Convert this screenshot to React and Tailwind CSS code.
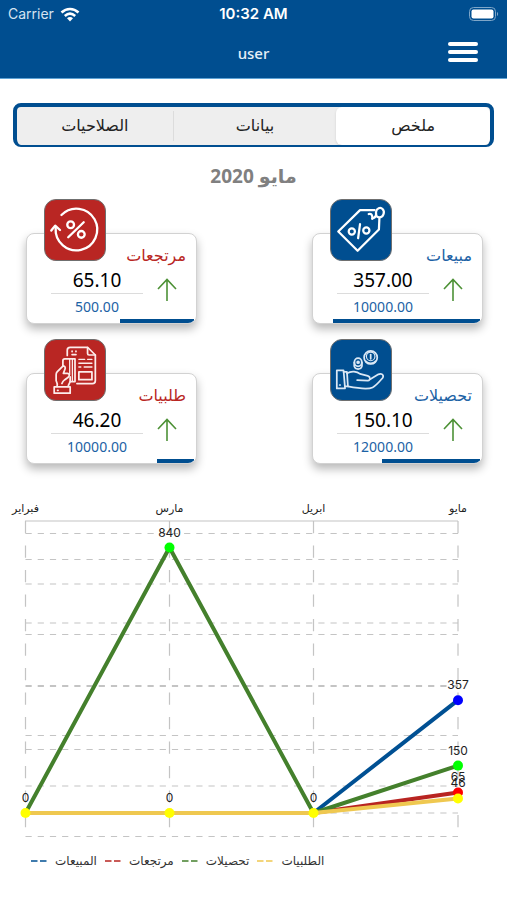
import { useState } from 'react';

const TABS = ['ملخص', 'بيانات', 'الصلاحيات'];

const STATS = [
  { id: 'sales', title: 'مبيعات', value: '357.00', target: '10000.00', progress: 87, tone: 'blue', Icon: TagIcon },
  { id: 'returns', title: 'مرتجعات', value: '65.10', target: '500.00', progress: 44, tone: 'red', Icon: ReturnIcon },
  { id: 'collections', title: 'تحصيلات', value: '150.10', target: '12000.00', progress: 58, tone: 'blue', Icon: HandIcon },
  { id: 'orders', title: 'طلبيات', value: '46.20', target: '10000.00', progress: 22, tone: 'red', Icon: OrderIcon },
];

const MONTHS = ['فبراير', 'مارس', 'ابريل', 'مايو'];

const SERIES = [
  { name: 'المبيعات', line: '#005093', dot: '#0000ff', data: [0, 0, 0, 357] },
  { name: 'مرتجعات', line: '#b82421', dot: '#ff0000', data: [0, 0, 0, 65] },
  { name: 'تحصيلات', line: '#44802c', dot: '#00ff00', data: [0, 840, 0, 150] },
  { name: 'الطلبيات', line: '#efc850', dot: '#ffff00', data: [0, 0, 0, 46] },
];

// chart geometry, in viewBox units
const COLS = [25.5, 169.5, 313.5, 458];
const GRID = [43.5, 69.5, 94, 133, 144.5, 195.5, 196.5, 245.5, 259.5, 296, 323, 346.5];
const AXIS_TOP = 31;
const ZERO = 323;
const yOf = (v) => ZERO - v * 0.316;

function ReturnIcon() {
  return (
    <svg viewBox="0 0 62 62" className="h-full w-full" fill="none" stroke="white" strokeWidth="2.4" strokeLinecap="round" strokeLinejoin="round" aria-hidden="true">
      <path d="M17 15.5A21.5 21.5 0 1 1 11 29" />
      <path d="M6.5 31.5 10.5 26.5 15.5 31" />
      <circle cx="26.5" cy="25.5" r="3.5" />
      <circle cx="37.5" cy="35.5" r="3.5" />
      <path d="M40 23 24 38.5" />
    </svg>
  );
}

function TagIcon() {
  return (
    <svg viewBox="0 0 62 62" className="h-full w-full" fill="none" stroke="white" strokeWidth="2.3" strokeLinecap="round" strokeLinejoin="round" aria-hidden="true">
      <path d="M45 10.5H30L7.5 32.5 27.5 52.5 49.5 30.5 50 19" />
      <path d="M39 14.5C40.5 14 42 14.5 42.5 16.5C43 18.5 42.5 19.5 42.5 19.5" />
      <path d="M43 19C46.5 18 47 15 46.5 12.5C47 8.5 51 7 53.5 9.5C56 12.5 54 18 50 18C47.5 18 46 16.5 46.5 12.5" />
      <circle cx="21.5" cy="32.5" r="3.2" />
      <circle cx="36.5" cy="31.5" r="3.2" />
      <path d="M30 25 28 39.5" />
    </svg>
  );
}

function HandIcon() {
  return (
    <svg viewBox="0 0 62 62" className="h-full w-full" fill="none" stroke="#dbe8f5" strokeWidth="1.8" strokeLinecap="round" strokeLinejoin="round" aria-hidden="true">
      <path d="M6 31.5H13L14.5 50H6Z" />
      <path d="M13 33H16.5L17.5 48H14.5" />
      <path d="M9 46.5H9.5" />
      <path d="M16.5 34.5C21 31.5 27 32.5 30 35L38 37C41 38 41 41.5 38 42L27 41.5" />
      <path d="M40.5 40.5 49 35.5C52 34 55 36 53.5 39C50 43 47 47 43 49C38 51.5 28 50 17.5 48" />
      <circle cx="41" cy="18" r="6.8" />
      <circle cx="41" cy="17" r="4.4" strokeWidth="1.2" />
      <path d="M41 15V19.5" />
      <path d="M36 22C38 25 44 25 46 22" />
      <ellipse cx="28" cy="23" rx="3.8" ry="4.2" />
      <path d="M24 23V27C25 31 31 31 32 27V23" />
      <circle cx="28" cy="23" r="1" />
    </svg>
  );
}

function OrderIcon() {
  return (
    <svg viewBox="0 0 62 62" className="h-full w-full" fill="none" stroke="#fdeceb" strokeWidth="1.8" strokeLinecap="round" strokeLinejoin="round" aria-hidden="true">
      <path d="M23 16V10.5C23 8.5 24 7.5 26 7.5H44L52 15.5V42C52 44 51 45 49 45H33" />
      <path d="M44 8V14C44 15 44.5 15.5 45.5 15.5H52" />
      <path d="M28 11.5V12M32 11.5V12M28 15H32" />
      <path d="M35 20H41M44 20H48.5M35 24H48.5M35 28H37M40.5 28H48.5" strokeWidth="1.5" />
      <path d="M35 33H48.5V41H35Z" />
      <path d="M18.5 27V21.5C18.5 20 19 19.5 20.5 19.5H31V43H26" />
      <path d="M25.5 20V36M28.3 20V42" strokeWidth="1.3" />
      <path d="M18.5 27 12.5 33C11.5 34 11.5 35 11.5 36V42C12.5 44 13 46 12.5 48" />
      <path d="M18.5 27C20.5 26.5 21.5 28.5 20.5 30.5L19 34.5H22.5C25 34 26 36.5 24 38.5L20.5 41C18.5 42.5 18 43.5 17.5 45" />
      <path d="M26 38V43C25.5 45 24 46 24 48" />
      <path d="M9.5 48.5H26V55H9.5Z" />
      <path d="M13 52H13.5" />
    </svg>
  );
}

function StatusBar() {
  return (
    <div dir="ltr" className="grid h-7 grid-cols-3 items-center px-2 font-['Inter',sans-serif] text-sm text-white">
      <div className="flex items-center gap-1.5 text-[#d5e3f0]">
        <span>Carrier</span>
        <svg viewBox="0 0 20 15" className="h-[15px] w-5" fill="none" stroke="white" strokeWidth="2.6" aria-hidden="true">
          <path d="M1.5 5.5C6.5 .8 13.5 .8 18.5 5.5" />
          <path d="M4.8 9C8 6.2 12 6.2 15.2 9" />
          <path d="M7 11.2C8.8 9.7 11.2 9.7 13 11.2L10 14.5Z" fill="white" stroke="none" />
        </svg>
      </div>
      <span className="text-center text-[15px] font-semibold">10:32 AM</span>
      <svg viewBox="0 0 30 14" className="h-3.5 w-[30px] justify-self-end" aria-hidden="true">
        <rect x="0.5" y="0.5" width="26" height="13" rx="4" fill="none" stroke="#7fa6c8" />
        <rect x="2.5" y="2.5" width="22" height="9" rx="2" fill="white" />
        <path d="M28 5V9C29.5 8.5 29.5 5.5 28 5Z" fill="#7fa6c8" />
      </svg>
    </div>
  );
}

function Header() {
  return (
    <header className="border-b border-[#5ea3d6] bg-[#004e90]">
      <StatusBar />
      <div dir="ltr" className="grid h-[50px] grid-cols-3 items-center px-[29px]">
        <h1 className="col-start-2 text-center text-[15px] font-medium text-[#e6eff7]">user</h1>
        <button type="button" aria-label="القائمة" className="flex h-7 w-[30px] flex-col gap-1 justify-self-end pt-[3px]">
          <span className="h-1 w-full rounded-full bg-white" />
          <span className="h-1 w-full rounded-full bg-white" />
          <span className="h-1 w-full rounded-full bg-white" />
        </button>
      </div>
    </header>
  );
}

function Tabs() {
  const [active, setActive] = useState(0);

  return (
    <div role="tablist" className="grid h-11 grid-cols-[154fr_164fr_156fr] overflow-hidden rounded-lg border-4 border-b-2 border-[#004e90] bg-[#eeeeee]">
      {TABS.map((tab, i) => (
        <button
          key={tab}
          type="button"
          role="tab"
          aria-selected={i === active}
          onClick={() => setActive(i)}
          className={
            i === active
              ? 'rounded-md bg-white pb-0.5 text-base text-[#222] shadow-sm'
              : 'my-1 border-l border-[#dcdcdc] pb-0.5 text-base text-[#222] last:border-l-0'
          }
        >
          {tab}
        </button>
      ))}
    </div>
  );
}

function StatCard({ title, value, target, progress, tone, Icon }) {
  const red = tone === 'red';
  return (
    <article className="relative w-[171px] rounded-lg border border-[#d2d2d2] bg-white shadow-[0_5px_10px_rgba(0,0,0,0.28)]">
      <div className={`absolute -top-[35px] left-[17px] h-[62px] w-[62px] rounded-xl border border-[#6f6f6f] ${red ? 'bg-[#b92623]' : 'bg-[#004e90]'}`}>
        <Icon />
      </div>
      <div className="flex h-[89px] flex-col overflow-hidden rounded-lg">
        <h3 className={`mt-2 px-2.5 text-base leading-[26px] ${red ? 'text-[#b92623]' : 'text-[#1c62a5]'}`}>{title}</h3>
        <div dir="ltr" className="flex min-h-0 gap-3.5 pl-6">
          <div className="w-[92px] text-center">
            <p className="border-b border-[#dcdcdc] text-[19px] leading-[25px] text-black">{value}</p>
            <p className="text-sm leading-[26px] text-[#1c62a5]">{target}</p>
          </div>
          <svg viewBox="0 0 20 24" className="mt-2.5 h-6 w-5" fill="none" stroke="#4d9136" strokeWidth="1.6" aria-hidden="true">
            <path d="M10 23V1.5M1 11 10 1.5 19 11" />
          </svg>
        </div>
        <div className="mt-auto mr-0.5 h-1 shrink-0 bg-[#004e90]" style={{ width: `${progress}%` }} />
      </div>
    </article>
  );
}

function TrendChart() {
  return (
    <figure dir="ltr">
      <svg viewBox="0 0 507 356" className="w-full font-['Inter','Noto_Sans','DejaVu_Sans',sans-serif] text-xs" role="img" aria-label="مبيعات">
        <g stroke="#c4c4c4" strokeWidth="1.2">
          {GRID.map((y) => (
            <line key={y} x1="25.5" x2="458" y1={y} y2={y} strokeDasharray="6.2 6" />
          ))}
          {COLS.map((x) => (
            <line key={x} x1={x} x2={x} y1={AXIS_TOP} y2="349" strokeDasharray="12.3 12.2" />
          ))}
          <line x1="25" x2="458" y1={AXIS_TOP} y2={AXIS_TOP} />
        </g>

        {MONTHS.map((m, i) => (
          <text key={m} x={COLS[i]} y="22" textAnchor="middle" fill="#222" className="text-[11px]">
            {m}
          </text>
        ))}

        {SERIES.map((s) => (
          <polyline
            key={s.name}
            points={s.data.map((v, i) => `${COLS[i]},${yOf(v)}`).join(' ')}
            fill="none"
            stroke={s.line}
            strokeWidth="4"
            strokeLinejoin="round"
          />
        ))}

        {/* points at zero share one spot, so only the top series draws them */}
        {SERIES.map((s, n) =>
          s.data.map((v, i) =>
            v > 0 || n === SERIES.length - 1 ? (
              <circle key={s.name + i} cx={COLS[i]} cy={yOf(v)} r="5" fill={s.dot} />
            ) : null
          )
        )}

        {SERIES.map((s, n) =>
          s.data.map((v, i) =>
            v > 0 || n === SERIES.length - 1 ? (
              <text key={s.name + i} x={COLS[i]} y={yOf(v) - 11} textAnchor="middle" fill="#222">
                {v}
              </text>
            ) : null
          )
        )}
      </svg>

      <figcaption className="flex flex-wrap items-center gap-2 pt-[5px] pl-[31px] text-xs leading-5 text-[#333]">
        {SERIES.map((s) => (
          <span key={s.name} className="flex items-center gap-2">
            <svg viewBox="0 0 16 2" className="h-0.5 w-4" aria-hidden="true">
              <path d="M0 1H6.5M9 1H15.5" stroke={s.line} strokeWidth="1.5" />
            </svg>
            {s.name}
          </span>
        ))}
      </figcaption>
    </figure>
  );
}

export default function App() {
  return (
    <div dir="rtl" className="min-h-screen bg-white font-['Noto_Sans','DejaVu_Sans',sans-serif]">
      <Header />
      <main>
        <div className="px-[13px] pt-6">
          <Tabs />
        </div>
        <h2 className="pt-[13px] text-center text-[19px] leading-8 font-bold text-[#808080]">مايو 2020</h2>
        <section className="grid grid-cols-[auto_auto] justify-between gap-y-[49px] pt-[41px] pr-6 pl-[26px]">
          {STATS.map((s) => (
            <StatCard key={s.id} {...s} />
          ))}
        </section>
        <div className="pt-[26px]">
          <TrendChart />
        </div>
      </main>
    </div>
  );
}
